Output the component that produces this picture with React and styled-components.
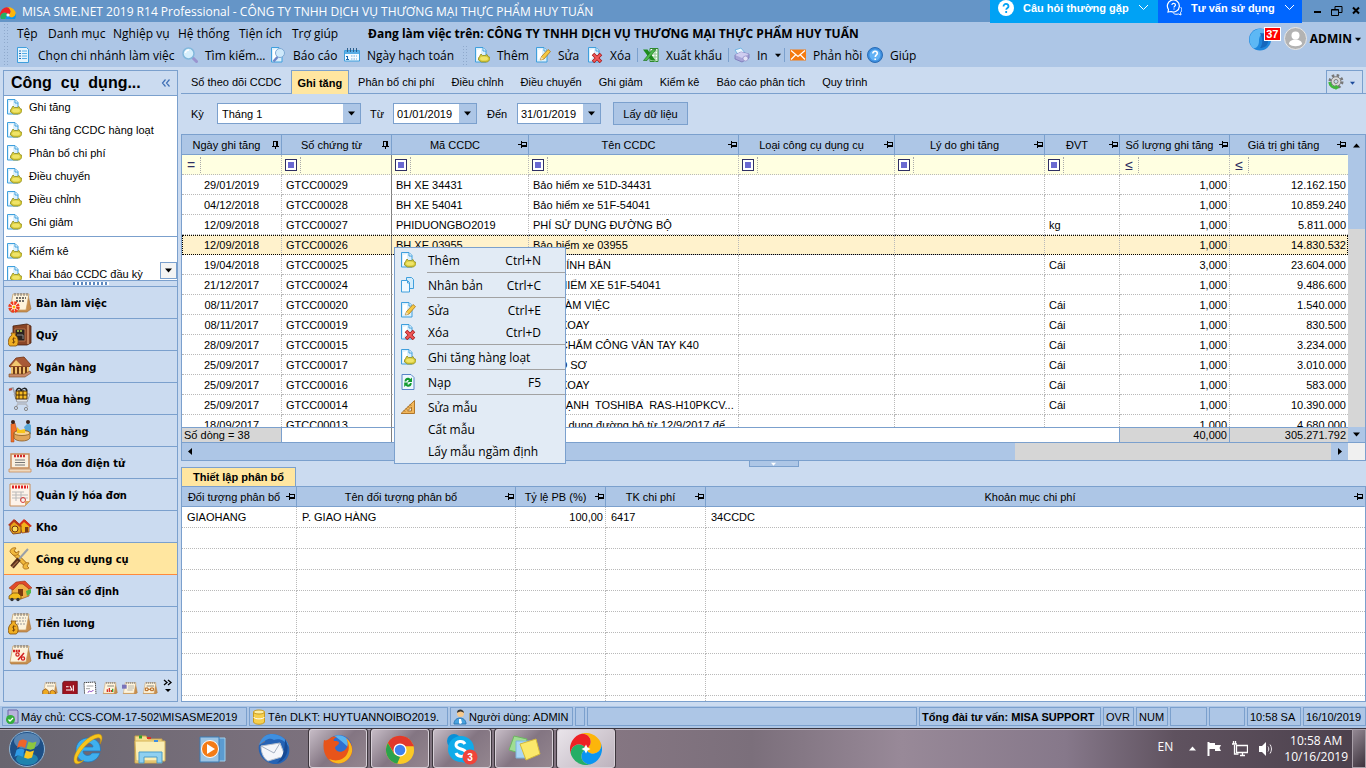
import React from "react";
import styled, { createGlobalStyle, css } from "styled-components";

const GlobalStyle = createGlobalStyle`
  * { box-sizing: border-box; }
  html, body { margin: 0; height: 100%; overflow: hidden; }
  body { font-family: "Liberation Sans", Arial, sans-serif; font-size: 11px; color: #000; }
  button, input, select { font: inherit; color: inherit; margin: 0; padding: 0; border: 0; background: none; border-radius: 0; outline: none; }
  svg { display: block; flex: none; }
  h1, h2, ul { margin: 0; padding: 0; list-style: none; }
`;

const line = "#7ba0cd";
const panel = "#cbdbf0";
const bar = "#adc6e6";
const active = "#ffe6a0";
const dots = "#b9b9b9";
const uiFont = '"Open Sans", "Noto Sans", sans-serif';

/* ---------- icons ---------- */

const Svg = ({ w = 16, h = w, vw = w, vh = h, children }) => (
  <svg width={w} height={h} viewBox={`0 0 ${vw} ${vh}`} fill="none" aria-hidden="true">{children}</svg>
);

/* One quarter of the pinwheel: its head bulges clockwise into the next quarter. */
const petal = "M16 16A8 8 0 0 0 16 0A16 16 0 0 1 32 16A8 8 0 0 1 16 16z";
const MisaLogo = ({ size = 16 }) => (
  <Svg w={size} vw={32}>
    {[["#fdb50a", -25], ["#0a95f0", 65], ["#25ae66", 155], ["#ee2024", 245]].map(([fill, turn]) => (
      <path key={turn} d={petal} fill={fill} transform={`rotate(${turn} 16 16)`} />
    ))}
    <path d="M16 11.500l1.500 3L20.500 16l-3 1.500-1.500 3-1.500-3-3-1.500 3-1.500z" fill="#fff" />
  </Svg>
);

const Page = () => (
  <>
    <path d="M1.500.500h7.500l3 3v11.500h-10.500z" fill="#dcf0fc" stroke="#3f9fdd" />
    <path d="M9 1v3h3" fill="#fff" stroke="#3f9fdd" />
    <path d="M3 3l4-1v7l-4 4z" fill="#fff" />
  </>
);
const DocCoin = () => (
  <Svg>
    <Page />
    <path d="M5.500 9.500l1.500-2.500 1.500 1.500h3l1.500-1 1 2 2 1v2l-2.500 2.500h-6l-3-2v-2z" fill="#d6c93a" stroke="#8c8a20" strokeWidth=".8" />
    <ellipse cx="10" cy="11.500" rx="4" ry="2" fill="#efe468" />
  </Svg>
);
const DocPen = () => (
  <Svg>
    <Page />
    <path d="M5.500 13l1-3.500 6.500-7 2.500 2-6.500 7.500z" fill="#f6c843" stroke="#a9781c" strokeWidth=".8" />
    <path d="M5.500 13l1-3 2 2z" fill="#f6e0b8" />
  </Svg>
);
const DocX = () => (
  <Svg>
    <Page />
    <path d="M6 7l8 8M14 7l-8 8" stroke="#a71616" strokeWidth="3.500" />
    <path d="M6.500 7.500l7 7M13.500 7.500l-7 7" stroke="#f05a5a" strokeWidth="2" />
  </Svg>
);
const DocLens = () => (
  <Svg>
    <Page />
    <circle cx="10" cy="6" r="4.500" fill="#cfe9fb" stroke="#7fa9d4" />
    <path d="M7.500 10l-4 4.500" stroke="#6f86c8" strokeWidth="2.500" />
  </Svg>
);
const DocList = () => (
  <Svg>
    <path d="M2.500.500h9l2 2v13h-11z" fill="#e5f4fd" stroke="#3f9fdd" />
    <path d="M4 4h2M4 6.500h2M4 9h2M4 11.500h2" stroke="#1c6fb8" />
    <path d="M7 4h5M7 6.500h5M7 9h5M7 11.500h5" stroke="#58aee6" />
  </Svg>
);
const Search = () => (
  <Svg>
    <path d="M10 10l4.500 4.500" stroke="#9a94cf" strokeWidth="3" strokeLinecap="round" />
    <circle cx="6.500" cy="6.500" r="5.500" fill="#d6effc" stroke="#82b8dc" strokeWidth="1.500" />
    <path d="M3.500 6c0-2 2-3 3.500-3" stroke="#fff" strokeWidth="1.500" />
  </Svg>
);
const Calendar = () => (
  <Svg>
    <path d="M.500 3.500h15v10.500h-15z" fill="#f4fbff" stroke="#3f9fdd" />
    <path d="M1 4h14v3h-14z" fill="#58aee6" />
    <path d="M3.500 1v4M6.500 1v4M9.500 1v4M12.500 1v4" stroke="#2c5f8c" />
    <path d="M3.500 9v3.500M2 9.500h1.500M2 12.500h3" stroke="#1667b2" />
    <path d="M7 9h6M7 12h6" stroke="#9cc9ea" strokeDasharray="1.500 1" strokeWidth="1.500" />
  </Svg>
);
const Copy = () => (
  <Svg>
    <path d="M6.500.500h5l2 2v9h-7z" fill="#d3ecfb" stroke="#3f9fdd" />
    <path d="M1.500 3.500h6l2 2v9.500h-8z" fill="#f0f9fe" stroke="#3f9fdd" />
    <path d="M7.500 4v2h2" stroke="#3f9fdd" />
  </Svg>
);
const Excel = () => (
  <Svg>
    <path d="M7 1.500h8v13h-8z" fill="#fff" stroke="#2f8a2f" />
    <path d="M9 4h6M9 7h6M9 10h6M9 13h6M12 2v13" stroke="#8fca8f" />
    <path d="M0 2.500h4.500l8 11h-4.500z" fill="#1c8b1c" />
    <path d="M13 2.500h-3.500l-9 11h3.500z" fill="#4cb84c" stroke="#136913" strokeWidth=".6" />
  </Svg>
);
const Printer = () => (
  <Svg>
    <path d="M1 3l6-2 4 5-6 3z" fill="#eaf6ff" stroke="#62aee0" strokeWidth=".8" />
    <path d="M1 8l6-3 8 2v4l-7 4-7-3z" fill="#a7a5d8" stroke="#7773b5" strokeWidth=".8" />
    <path d="M1 8l7 3 7-4-8-2z" fill="#cfcdf0" />
    <circle cx="11.500" cy="11.500" r="2.500" fill="#e4e3f7" stroke="#8683c0" strokeWidth=".6" />
  </Svg>
);
const Mail = () => (
  <Svg>
    <path d="M0 2.500h16v11h-16z" fill="#f47a10" />
    <path d="M1 3.500l7 6 7-6M1 12.500l5-5M15 12.500l-5-5" stroke="#fff" strokeWidth="1.200" />
  </Svg>
);
const Help = () => (
  <Svg>
    <circle cx="8" cy="8" r="7.500" fill="#3d8ede" stroke="#2a6cb5" />
    <circle cx="8" cy="8" r="5.500" fill="#63b2f5" />
    <path d="M5.800 6.500c0-3 4.500-2.800 4.500 0 0 1.500-2 1.500-2 3.500M8.200 11.500v1.500" stroke="#fff" strokeWidth="1.600" />
  </Svg>
);
const Refresh = () => (
  <Svg>
    <path d="M2 .500h9l3 3v12h-12z" fill="#eef7fe" stroke="#5b86c8" />
    <path d="M4.500 7.500c0-4 4-5 6-2.500l1.500-1.500v4.500h-4.500l1.500-1.500c-1-1-2.500-.5-2.700 1z" fill="#129a2f" />
    <path d="M11.700 9c0 4-4 5-6 2.500l-1.500 1.500v-4.500h4.500l-1.500 1.500c1 1 2.500.5 2.700-1z" fill="#129a2f" />
  </Svg>
);
const Ruler = () => (
  <Svg>
    <path d="M1 14.500L14.500 1.500v13z" fill="#f2b75b" stroke="#b0762a" />
    <path d="M7.500 12l4-4v4z" fill="#e2ebf5" stroke="#b0762a" />
    <path d="M4 11.500l1 1M6 9.500l1 1M8 7.500l1 1M10 5.500l1 1" stroke="#7c4f12" />
  </Svg>
);
const Gear = () => (
  <Svg>
    <circle cx="8" cy="7.500" r="6" stroke="#777" strokeWidth="3" strokeDasharray="2.400 2.300" />
    <circle cx="8" cy="7.500" r="4.800" fill="#d9d9d9" stroke="#808080" />
    <circle cx="8" cy="7.500" r="2" fill="#cbdbf0" stroke="#808080" />
    <path d="M1.500 8c.5 4 3.500 6 7 5.500" stroke="#3fb83a" strokeWidth="2.500" />
    <path d="M7.500 10.500l4 3-4 2.500z" fill="#3fb83a" />
  </Svg>
);
const PinIcon = ({ vertical }) => (
  <Svg w={9}>
    {vertical ? (
      <path d="M2.500 1.500h4M2.500 1v5M5.500 1v5M6.500 1v5M1 6.500h7M4.500 7v2" stroke="#000" />
    ) : (
      <path d="M0 4.500h3M3.500 1v7M4 2.500h5M4 5.500h5M4 6.500h5M8.500 2v5" stroke="#000" />
    )}
  </Svg>
);
const Caret = ({ dir = "down", color = "#000", size = 7 }) => {
  const d = { down: "M0 1.500h7l-3.500 4z", up: "M0 5.500h7l-3.500-4z", left: "M5 0v7l-4-3.500z", right: "M2 0v7l4-3.500z" }[dir];
  return <Svg w={size} vw={7}><path d={d} fill={color} /></Svg>;
};
const Chevron = () => <Svg w={11} h={7}><path d="M1 1l4.500 4.500L10 1" stroke="#fff" /></Svg>;

/* Desk-calendar sheet shared by several module icons. */
const Sheet = ({ children }) => (
  <>
    <path d="M20 4l3 14-4 3H3l-1-2z" fill="#c98f4f" stroke="#a8763c" strokeWidth=".7" />
    <path d="M5 3h16l-3 16H2z" fill="#fdf3dc" stroke="#c79a5b" strokeWidth=".7" />
    <path d="M7 2v3M10 2v3M13 2v3M16 2v3M19 2v3" stroke="#555" strokeWidth=".8" />
    {children}
  </>
);
const MoneyBag = () => (
  <>
    <path d="M4 12l-1-2h5l-1 2c4 2 4 10 1 11H2c-3-1-2-9 2-11z" fill="#f0ae22" stroke="#7d4c0b" strokeWidth=".8" />
    <path d="M7.500 15.500c-2-1-4 .5-2 1.800s1.500 3-1.200 2.200M5.500 14.500v6" stroke="#6b3a06" strokeWidth=".8" />
  </>
);
const moduleArt = {
  desk: (
    <Sheet>
      <path d="M8 7h10M8 10h9" stroke="#444" strokeWidth="1.300" strokeDasharray="2 1" />
      <circle cx="6" cy="16" r="4" fill="#fff" stroke="#f03a1c" strokeWidth="3.500" strokeDasharray="2.200 .9" />
      <circle cx="6" cy="16" r="1.500" fill="#f7b500" />
    </Sheet>
  ),
  safe: (
    <>
      <path d="M5 3l14-2 4 2v17l-4 2H5z" fill="#8a4526" stroke="#46200c" strokeWidth=".8" />
      <path d="M7 6h10v12H7z" fill="#2b2320" stroke="#b9754a" />
      <path d="M9 8h6" stroke="#b8d24e" strokeWidth="1.500" strokeDasharray="2 1" /><path d="M9 12h6v4" stroke="#8b8b8b" />
      <path d="M20 2v19" stroke="#c4835a" strokeWidth="2" />
      <MoneyBag />
    </>
  ),
  bank: (
    <>
      <path d="M1 11L8 3l8-1 7 8-2 2H2z" fill="#a85a36" stroke="#70300f" strokeWidth=".8" />
      <path d="M3 11l5-6 6 6z" fill="#f1c870" />
      <path d="M3 12h17v7H3z" fill="#6e3b18" />
      <path d="M4 12v7M8 12v7M12 12v7M16 12v7M20 12v6" stroke="#f0bf6b" strokeWidth="2" />
      <path d="M1 19h15l6-3 1 2-6 4H1z" fill="#c98a6b" stroke="#7a4317" strokeWidth=".6" />
    </>
  ),
  cart: (
    <>
      <path d="M1 2l4-1 4 13h9" stroke="#9b9ea6" strokeWidth="1.500" />
      <path d="M1 3l3-1" stroke="#c54c3a" strokeWidth="2" />
      <path d="M6 7h16l-3 8H9z" fill="#dfe3ea" stroke="#9b9ea6" />
      <path d="M8 4h11v8H8z" fill="#f8bd22" stroke="#4b2c05" />
      <path d="M11 3v9M15 3v9M8 8h11" stroke="#4b2c05" />
      <path d="M8 4c2-4 5-3 5 0 1-3 5-4 6 0" stroke="#222" strokeWidth="1.500" />
      <path d="M9 17h9l2 3M10 17l-2 3" stroke="#b4b8c0" strokeWidth="1.500" />
      <circle cx="8" cy="21" r="1.600" stroke="#888" /><circle cx="18" cy="22" r="1.600" stroke="#888" />
    </>
  ),
  sell: (
    <>
      <path d="M3 5l4-1 2 8-3 4v7H3z" fill="#f0702a" stroke="#a3441a" strokeWidth=".5" /><circle cx="5" cy="3" r="2" fill="#3a2118" />
      <path d="M16 8l4-4 3 2v9l-4 1z" fill="#58a6d8" /><circle cx="20" cy="3" r="2" fill="#3a2118" />
      <path d="M6 14c0-3 16-3 16 0v5c-2 4-14 4-16 0z" fill="#e0a65a" stroke="#8c5a21" strokeWidth=".8" />
      <ellipse cx="14" cy="14" rx="8" ry="2.500" fill="#f8d493" stroke="#8c5a21" strokeWidth=".8" />
      <path d="M9 8l3 3 5-1v4H9z" fill="#f7c51b" />
    </>
  ),
  einvoice: (
    <>
      <path d="M3 3h18v14H3z" fill="#f9efe0" stroke="#c98d58" strokeWidth="1.500" />
      <path d="M6 5h12" stroke="#d32a2a" strokeWidth="2.500" strokeDasharray="2 1" />
      <path d="M7 9h10M7 11.500h10M7 14h10" stroke="#777" />
      <path d="M1 18h22v3H1z" fill="#f0d9bf" stroke="#c98d58" strokeWidth=".8" />
    </>
  ),
  invoice: (
    <>
      <path d="M2 1h20v17l-5 5H2z" fill="#fdf3ea" stroke="#c98d58" />
      <path d="M4 4h16" stroke="#e02121" strokeWidth="3" strokeDasharray="2 1" />
      <path d="M4 9h12M4 12h16M4 15h16M8 9v9M13 9v9" stroke="#b9b9b9" />
      <circle cx="15" cy="17" r="2.500" stroke="#d63a3a" />
      <path d="M22 18h-5v5z" fill="#d9a766" />
    </>
  ),
  store: (
    <>
      <path d="M11 10l6-5 6 6-2 1v5l-7 1z" fill="#f2b31c" stroke="#8b2d10" strokeWidth=".7" />
      <path d="M10 10l6-6 8 7-2 1-6-5-4 4z" fill="#d3321b" />
      <path d="M2 10l5-5 6 6v7l-8 1-3-4z" fill="#e8a41a" stroke="#70300f" strokeWidth=".8" />
      <path d="M0 10l6-6 8 7-2 1-6-5-4 4z" fill="#b3371d" />
      <circle cx="7" cy="14" r="3" fill="#f9dd5c" stroke="#70300f" />
      <path d="M17 12h3v5h-3z" fill="#7b3d13" />
    </>
  ),
  tools: (
    <>
      <path d="M5 5l13 13" stroke="#a36a14" strokeWidth="4.500" />
      <path d="M5 5l13 13" stroke="#f0b83c" strokeWidth="3" />
      <path d="M2 5c0-3 3-5 6-4L6 4l2 2 3-2c0 4-3 5-6 4zM15 20c0-3 3-5 6-4l-2 3 2 2c-3 2-6 1-6-1z" fill="#f0b83c" stroke="#a36a14" strokeWidth=".8" />
      <path d="M20 2l-9 10" stroke="#9aa0a8" strokeWidth="2" />
      <path d="M11 12l-7 8" stroke="#57301a" strokeWidth="4.500" />
      <path d="M10 14l-6 6" stroke="#a06a42" strokeWidth="1.200" />
    </>
  ),
  asset: (
    <>
      <path d="M4 9l8-6 9 6v8l-8 3-9-3z" fill="#f0b145" stroke="#9b5a17" strokeWidth=".7" />
      <path d="M1 9l7-6 9-1 7 7-3 1-6-5-4 0-6 6z" fill="#e04a28" stroke="#8e2610" strokeWidth=".5" />
      <path d="M10 10h5v7h-5z" fill="#7c3a10" />
      <path d="M18 12l5-2v4l-4 3z" fill="#55b544" />
      <path d="M1 17l4-3h5l3 3v3H1z" fill="#f3bd1f" stroke="#6d4306" strokeWidth=".7" />
      <circle cx="4" cy="20.500" r="1.700" fill="#333" /><circle cx="10" cy="20.500" r="1.700" fill="#333" />
    </>
  ),
  salary: <Sheet><path d="M8 7h10M8 10h10M9 13h8" stroke="#999" strokeDasharray="2 1" /><MoneyBag /></Sheet>,
  tax: (
    <Sheet>
      <path d="M5 8h7" stroke="#d31f1f" strokeWidth="2.500" strokeDasharray="2 .6" />
      <path d="M10 17l6-7" stroke="#d31f1f" strokeWidth="1.500" />
      <circle cx="9.500" cy="11.500" r="1.600" stroke="#d31f1f" strokeWidth="1.300" />
      <circle cx="15" cy="15.500" r="1.600" stroke="#d31f1f" strokeWidth="1.300" />
    </Sheet>
  ),
  price: <Sheet><path d="M8 8h10" stroke="#555" strokeDasharray="2 1" /><path d="M1 22v-7l5-3 4 4v6zM12 21v-5l4-2 4 3v4z" fill="#eeaa22" stroke="#7a3e0d" /></Sheet>,
  ledger: (
    <>
      <path d="M3 1h20v20l-2 2H1V3z" fill="#9c1420" stroke="#5c0810" />
      <path d="M6 9h4M6 14h9M12 8l3 6M17 7v9" stroke="#fff" strokeWidth="1.600" />
    </>
  ),
  contract: (
    <>
      <path d="M3 3l17-1 1 19-17 1z" fill="#fff" stroke="#444" strokeWidth="1.500" strokeDasharray="2 1" />
      <path d="M7 8h10M6 12h6" stroke="#777" /><path d="M9 18c2-6 4 2 8-4" stroke="#8a3fc0" strokeWidth="1.500" />
    </>
  ),
  budget: <Sheet><path d="M8 8h10" stroke="#555" /><path d="M8 17v-4M11 17v-6M14 17v-3" stroke="#d8302a" strokeWidth="2" /><path d="M16 17v-5" stroke="#36a636" strokeWidth="2" /></Sheet>,
  report: <Sheet><path d="M9 8h9M9 11h9M8 14h8" stroke="#999" /><path d="M0 6h7v6H0z" fill="#7a72b8" /></Sheet>,
  merge: <Sheet><path d="M7 8h11" stroke="#555" /><path d="M5 11h4v4H5zM13 11h4v4h-4z" stroke="#b5651d" strokeWidth="1.500" /><path d="M9 13h4" stroke="#b5651d" strokeWidth="1.500" /></Sheet>,
};
const ModuleIcon = ({ name, size = 24 }) => <Svg w={size} vw={24}>{moduleArt[name]}</Svg>;

/* ---------- shell ---------- */

const Shell = styled.div`
  height: 100vh; display: flex; flex-direction: column; background: ${panel}; overflow: hidden; white-space: nowrap;
`;
const TitleBar = styled.header`
  height: 22px; flex: none; display: flex; align-items: center; background: #6595c7; color: #fff;
  font: 12px ${uiFont};
`;
const TitleText = styled.h1`font: inherit; flex: 1; padding-left: 6px;`;
const PromoButton = styled.button`
  align-self: flex-start; height: 23px; width: ${p => p.$w}px; background: ${p => p.$bg};
  display: flex; align-items: center; gap: 9px; padding: 0 12px 8px 8px; font-size: 11px;
  font-weight: bold; font-family: "Liberation Sans", sans-serif; color: #fff; z-index: 1;
  span { flex: 1; text-align: left; }
`;
const WindowButtons = styled.div`
  width: 64px; display: flex; justify-content: space-between; padding: 0 4px 0 10px;
`;
const CommandArea = styled.div`
  height: 45px; flex: none; display: flex; background: ${bar}; font: 12px ${uiFont};
`;
const Commands = styled.div`flex: 1; min-width: 0;`;
const MenuRow = styled.nav`height: 22px; display: flex; align-items: center; padding-left: 3px;`;
const Grip = styled.div`
  width: 5px; height: 20px; flex: none; margin-right: ${p => p.$gap}px;
  background-image: radial-gradient(circle, #8fa9cc 1px, transparent 1px); background-size: 3px 3px;
`;
const MenuItem = styled.button`width: ${p => p.$w}px; text-align: left;`;
const Workplace = styled.strong`flex: none; font-weight: bold; margin-right: 3px;`;
const ToolRow = styled.div`height: 22px; display: flex; align-items: center; padding-left: 3px;`;
const Tool = styled.button`
  width: ${p => p.$w}px; display: flex; align-items: center; gap: 7px; flex: none;
`;
const ToolSep = styled.div`width: 1px; height: 14px; margin-right: 5px; background: ${line};`;
const Account = styled.div`display: flex; align-items: center; padding: 0 5px 12px 0;`;
const Globe = styled.button`position: relative; width: 36px; height: 24px;`;
const CountBadge = styled.span`
  position: absolute; left: 16px; top: 0; width: 17px; height: 14px; background: #f00; color: #fff;
  border: 1px solid #fff; font: bold 11px/12px "Liberation Sans", sans-serif; text-align: center;
`;
const UserButton = styled.button`
  display: flex; align-items: center; gap: 3px; font-weight: bold;
`;
const Body = styled.div`flex: 1; min-height: 0; display: flex; gap: 3px; padding: 3px 0 4px 3px;`;

/* ---------- side bar ---------- */

const Side = styled.aside`
  width: 175px; flex: none; border: 1px solid ${line}; display: flex; flex-direction: column;
`;
const SideHead = styled.div`
  height: 25px; flex: none; display: flex; align-items: center; justify-content: space-between;
  padding: 0 6px 0 7px; border-bottom: 1px solid ${line};
  h2 { font-size: 16px; white-space: pre; }
`;
const TaskList = styled.ul`position: relative; flex: 1; min-height: 0; background: #fff; overflow: hidden;`;
const TaskItem = styled.li`
  height: 23px; margin-left: 2px;
  ${p => p.$split && css`border-top: 1px solid ${line}; margin-top: 2px; padding-top: 3px; height: 27px;`}
`;
const TaskButton = styled.button`display: flex; align-items: center; gap: 7px; height: 22px;`;
const ScrollDown = styled.button`
  position: absolute; right: 0; bottom: 1px; width: 17px; height: 17px; background: #f4f4f4;
  border: 1px solid ${line}; display: grid; place-items: center;
`;
const Splitter = styled.div`
  height: 6px; flex: none; border-top: 1px solid ${line}; display: flex; justify-content: center;
  &::after { content: ""; width: 36px; height: 3px; margin-top: 1px;
    background: repeating-linear-gradient(90deg, #5f8ac0 0 2px, #fff 2px 4px); }
`;
const ModuleButton = styled.button`
  height: 32px; flex: none; width: 100%; display: flex; align-items: center; gap: 4px; padding: 1px 0 0 4px;
  border-bottom: 1px solid ${line}; font: bold 11px "DejaVu Sans Condensed", "DejaVu Sans", sans-serif;
  ${p => p.$active && css`background: ${active}; border-bottom-color: #ff8a3c;`}
`;
const SideFoot = styled.div`
  height: 31px; flex: none; display: flex; align-items: center; justify-content: flex-end; gap: 4px; padding: 0 3px 1px 0;
  border-top: 1px solid ${line};
`;
const Modules = styled.nav`flex: none; border-top: 1px solid ${line}; ${ModuleButton}:last-child { border-bottom: 0; height: 31px; }`;

/* ---------- work area ---------- */

const Main = styled.main`position: relative; flex: 1; min-width: 0; display: flex; flex-direction: column;`;
const TabBar = styled.div`
  height: 24px; flex: none; display: flex; gap: 1px; border-bottom: 1px solid ${line}; padding: 0 3px 0 2px;
`;
const Tab = styled.button`
  padding: 0 8px; height: 24px; flex: none;
  ${p => p.$active && css`
    font-weight: bold; background: ${active}; border: 1px solid ${line}; border-bottom: 0; padding: 0 6px;`}
`;
const Options = styled.button`
  margin-left: auto; height: 24px; width: 37px; border: 1px solid ${line}; display: flex; align-items: center; gap: 6px; padding-left: 1px;
`;
const FilterForm = styled.form`
  height: 40px; flex: none; display: flex; align-items: center; padding: 0 0 1px 10px;
`;
const Label = styled.label`width: ${p => p.$w}px; flex: none;`;
const Field = styled.div`
  width: ${p => p.$w}px; height: 21px; margin-right: ${p => p.$mr}px; display: flex; border: 1px solid ${line}; background: #fff; position: relative;
`;
const FieldInput = styled.input`flex: 1; min-width: 0; padding-left: 3px;`;
const FieldSelect = styled.select`flex: 1; min-width: 0; appearance: none; padding: 0 20px 0 4px;`;
const FieldArrow = styled.span`width: 17px; flex: none; background: ${bar}; display: grid; place-items: center; pointer-events: none;
  ${p => p.$over && css`position: absolute; right: 0; top: 0; bottom: 0;`}`;
const LoadButton = styled.button`
  width: 75px; height: 23px; background: ${bar}; border: 1px solid ${line};
`;

const GridFrame = styled.section`
  border: 1px solid ${line}; display: flex; flex-direction: column; background: #fff;
  ${p => (p.$h ? css`height: ${p.$h}px; flex: none;` : css`flex: 1; min-height: 0; overflow: hidden;`)}
`;
const GridTop = styled.div`display: flex; flex: 1; min-height: 0;`;
const GridCols = styled.div`flex: 1; min-width: 0; display: flex; flex-direction: column;`;
const GridClip = styled.div`flex: 1; min-height: 0; overflow: hidden;`;
const Table = styled.table`width: 100%; table-layout: fixed; border-collapse: separate; border-spacing: 0;`;
const Th = styled.th`
  height: 20px; padding: 0 1px 0 0; font-weight: normal; background: ${bar};
  border-right: 1px solid ${line}; border-bottom: 1px solid ${line};
  &:last-child { border-right-color: ${bar}; }
`;
const ThInner = styled.div`display: flex; align-items: center; span { flex: 1; overflow: hidden; text-align: center; }`;
const Td = styled.td`
  height: ${p => (p.$detail ? 21 : 20)}px; text-align: ${p => p.$align || "left"};
  padding: 0 2px 0 ${p => (p.$align === "center" ? 2 : p.$detail ? 5 : 4)}px;
  overflow: hidden; text-overflow: ellipsis; border-right: 1px dotted ${dots}; border-bottom: 1px dotted ${dots};
  ${p => p.$frozen && css`border-right: 1px solid #808080;`}
  &:last-child { border-right: 0; }
`;
const Tr = styled.tr`${p => p.$selected && css`background: #fff2cc; outline: 1px dotted #000; outline-offset: -1px;`}`;
const FilterTd = styled(Td)`background: #ffffe1; padding: 0;`;
const FilterCell = styled.div`display: flex; height: 19px; align-items: center;
  input { flex: 1; min-width: 0; height: 16px; border-left: 1px dotted #aaa; padding: 0 3px; }`;
const FilterOp = styled.span`
  width: 18px; flex: none; display: grid; place-items: center; color: #2f2f63; font-size: 14px; line-height: 16px;
  i { width: 12px; height: 12px; border: 1px solid #2f2f63; background: #6a69d0; box-shadow: inset 0 0 0 2px #fff; }
`;
const SumTd = styled.td`
  height: 15px; padding: 0 2px; text-align: ${p => p.$align || "left"}; line-height: 13px;
  border-top: 1px solid ${line};
  ${p => p.$filled && css`background: #d6d6d6; border-right: 1px solid ${line};`}
  ${p => p.$frozen && css`border-right: 1px solid #808080;`}
  ${p => p.$edge && css`border-right: 1px solid ${line};`}
  &:last-child { border-right: 0; }
`;
const VScroll = styled.div`width: 17px; flex: none; display: flex; flex-direction: column; background: #d6d6d6;`;
const Arrow = styled.button`display: grid; place-items: center; flex: none; background: ${bar}; width: 17px; height: ${p => p.$h || 17}px;`;
const VThumb = styled.div`height: 24%; flex: none; background: ${bar};`;
const Spacer = styled.div`flex: 1;`;
const HScroll = styled.div`height: 18px; flex: none; display: flex; border-top: 1px solid ${line}; background: #d6d6d6;`;
const HThumb = styled.div`width: 69%; background: ${bar};`;
const Corner = styled.div`width: 17px; background: #f0f0f0;`;
const Collapse = styled.button`
  align-self: center; width: 50px; height: 6px; flex: none; border: 1px solid ${line}; border-top: 0; background: ${bar};
  display: grid; place-items: center;
`;
const DetailTab = styled.button`
  align-self: flex-start; flex: none; width: 115px; height: 19px; border: 1px solid ${line}; border-bottom: 0; background: ${active}; font-weight: bold;
`;

/* ---------- context menu ---------- */

const Context = styled.div`
  position: absolute; left: 213px; top: 177px; width: 172px; padding: 1px 0; background: #e2ebf5; border: 1px solid ${line};
  font: 12px ${uiFont};
`;
const ContextItem = styled.button`
  width: 100%; height: 22px; display: grid; grid-template-columns: 28px 1fr auto; align-items: center; text-align: left;
  padding: 0 24px 0 5px;
`;
const ContextSep = styled.div`height: 3px; margin-left: 32px; border-bottom: 1px solid transparent; border-top: 1px solid transparent; background: #a2a2a2; background-clip: padding-box;`;

/* ---------- status bar and task bar ---------- */

const Status = styled.footer`
  height: 22px; flex: none; display: flex; gap: 2px; padding: 1px 0 2px 2px; background: ${bar};
`;
const StatusCell = styled.div`
  ${p => (p.$w ? css`width: ${p.$w}px; flex: none;` : css`flex: 1;`)}
  border: 1px solid ${line}; display: flex; align-items: center; gap: 2px; padding: 0 2px;
  font-weight: ${p => (p.$bold ? "bold" : "normal")};
`;
const TaskBar = styled.div`
  height: 40px; flex: none; display: flex; align-items: center; border-top: 1px solid #3b3640;
  background: linear-gradient(90deg, #68656f 0, #7a707c 20%, #857682 45%, #7b6f7b 55%, #988998 66%, #86788a 78%, #5f525f 86%, #4b404c 100%);
  box-shadow: inset 0 1px 0 #b7adb7; color: #fff;
`;
const StartButton = styled.button`width: 57px; height: 39px; padding-left: 8px; flex: none;`;
const AppButton = styled.button`
  width: 62px; height: 39px; display: grid; place-items: center; flex: none;
  ${p => p.$open && css`
    width: 58px; margin-left: 4px; border: 1px solid #d7cfd7; border-radius: 3px; box-shadow: 0 0 0 1px #3d363d;
    background: linear-gradient(135deg, ${p.$front ? "#e9e4ea, #bdb3bd" : "#c6bcc6, #837582 50%, #94868f"});`}
`;
const Tray = styled.div`
  margin-left: auto; display: flex; align-items: center; height: 39px; gap: 10px; font: 12px/16px ${uiFont}; text-align: center;
`;
const TrayLang = styled.span`margin-right: 6px; padding-bottom: 4px;`;
const ShowDesktop = styled.button`width: 14px; height: 39px; margin-left: -6px; border: 1px solid #a89fa8; background: linear-gradient(135deg, #938893, #3d333d);`;

const apps = [
  { name: "Internet Explorer", art: (
    <Svg w={34}>
      <path d="M17 6c8 0 13 5 12.500 13H12c0 5 7 6 9 2h8c-2 6-7 9-12 9C9 30 5 25 5 18S10 6 17 6zm-5 9h10c0-5-9-5-10 0z" fill="#3fb0ee" stroke="#1d77bd" strokeWidth=".7" />
      <path d="M4 31C0 26 8 12 19 5c7-4 12-4 12 1 0 2-1 4-2 6 1-4 1-7-3-6C17 8 5 24 6 28c1 3 5 1 7 0-3 3-7 5-9 3z" fill="#f8c51c" stroke="#c68f0c" strokeWidth=".5" />
    </Svg>) },
  { name: "Explorer", art: (
    <Svg w={34}>
      <path d="M2 4h11l2 3h14v24H2z" fill="#f4dc8c" stroke="#c9a146" />
      <path d="M2 9h30v20H3z" fill="#fbeeb5" stroke="#d6b255" />
      <path d="M6 5h3" stroke="#33a02c" strokeWidth="3" /><path d="M14 6h4" stroke="#d8302a" strokeWidth="2" /><path d="M21 9h4" stroke="#3f8fe0" strokeWidth="2" />
      <path d="M6 31v-11h23v11h-5v-6H11v6z" fill="#8fd0f0" stroke="#4a9cc9" />
    </Svg>) },
  { name: "Media Player", art: (
    <Svg w={30}>
      <path d="M6 4h22v23H6z" fill="#5b9bd0" stroke="#9fd0ee" /><path d="M3 3h19v25H3z" fill="#9cc4e4" stroke="#3c7db5" />
      <circle cx="13" cy="15" r="8.500" fill="#f47b16" stroke="#fff" /><path d="M10 10l8 5-8 5z" fill="#fff" />
    </Svg>) },
  { name: "Thunderbird", art: (
    <Svg w={34}>
      <path d="M8 4c8-5 22 0 24 11s-6 18-15 17C7 31 0 22 2 13l6-3z" fill="#2563b5" />
      <path d="M8 4c8-5 22 0 24 11-4-7-10-9-15-7C12 5 9 8 2 13 3 9 5 6 8 4z" fill="#3e8fe0" />
      <path d="M4 14l19-3 5 13-17 5c-5-3-7-9-7-15z" fill="#f4f6fa" stroke="#b6bfcc" /><path d="M4 14l13 7 6-10" stroke="#a6b1c2" />
      <path d="M28 7c6 10 1 22-8 24 5-4 8-12 8-24z" fill="#174a94" />
    </Svg>) },
  { name: "Firefox", open: true, art: (
    <Svg w={32}>
      <circle cx="17" cy="15" r="13" fill="#2f6fd0" /><path d="M12 3c8-3 18 3 17 14-5-5-9-9-17-14z" fill="#59b4f0" />
      <path d="M2 7c2 1 3 0 5-1 3-3 5-3 8-2-3 1-4 3-3 4 2 0 5 0 5 2s-4 3-4 5c1 4 6 5 10 2 4-4 3-9 1-12 7 5 8 13 4 19-5 8-17 8-22 2C1 20 1 13 2 7z" fill="#e8541a" />
      <path d="M24 5c7 6 8 14 3 20-5 7-15 7-20 1 7 3 15 1 18-5 3-5 2-11-1-16z" fill="#f9b91c" />
    </Svg>) },
  { name: "Chrome", open: true, art: (
    <Svg w={30} vw={32}>
      <circle cx="16" cy="16" r="15" fill="#fbc926" /><path d="M3 8.500a15 15 0 0 1 26 0L31 12H16l-6 8z" fill="#e2392b" />
      <path d="M3 8.500l7 12 6 3-3 7.200A15 15 0 0 1 3 8.500z" fill="#2ba24c" /><circle cx="16" cy="16" r="7" fill="#fff" /><circle cx="16" cy="16" r="5.600" fill="#3f82ee" />
    </Svg>) },
  { name: "Skype", open: true, art: (
    <Svg w={32}>
      <circle cx="8" cy="8" r="7" fill="#0a8fd6" /><circle cx="15" cy="16" r="13" fill="#0fabea" /><circle cx="20" cy="22" r="8" fill="#0fabea" />
      <path d="M19 11c-2-4-9-3-9 1 0 5 10 3 10 8 0 4-8 5-10 0" stroke="#fff" strokeWidth="3" />
      <circle cx="24" cy="24" r="7.500" fill="#f0443a" />
      <text x="24" y="28" textAnchor="middle" fill="#fff" fontSize="10" fontFamily="Liberation Sans" fontWeight="bold">3</text>
    </Svg>) },
  { name: "Sticky Notes", open: true, art: (
    <Svg w={34}>
      <path d="M7 4l13 3-4 15L2 18z" fill="#9fdd92" stroke="#6db661" /><path d="M9 9h14v17H9z" fill="#a9d6f5" stroke="#7db4dc" />
      <path d="M13 12l16-5 4 15-14 6z" fill="#fbe96b" stroke="#d4b93a" />
    </Svg>) },
  { name: "MISA SME.NET", open: true, front: true, art: <MisaLogo size={32} /> },
];

/* ---------- data ---------- */

const menus = [["Tệp", 31], ["Danh mục", 65], ["Nghiệp vụ", 65], ["Hệ thống", 61], ["Tiện ích", 53], ["Trợ giúp", 76]];
const tasks = ["Ghi tăng", "Ghi tăng CCDC hàng loạt", "Phân bổ chi phí", "Điều chuyển", "Điều chỉnh", "Ghi giảm", "Kiểm kê", "Khai báo CCDC đầu kỳ"];
const modules = [
  ["desk", "Bàn làm việc"], ["safe", "Quỹ"], ["bank", "Ngân hàng"], ["cart", "Mua hàng"], ["sell", "Bán hàng"],
  ["einvoice", "Hóa đơn điện tử"], ["invoice", "Quản lý hóa đơn"], ["store", "Kho"], ["tools", "Công cụ dụng cụ"],
  ["asset", "Tài sản cố định"], ["salary", "Tiền lương"], ["tax", "Thuế"],
];
const tabs = ["Sổ theo dõi CCDC", "Ghi tăng", "Phân bổ chi phí", "Điều chỉnh", "Điều chuyển", "Ghi giảm", "Kiểm kê", "Báo cáo phân tích", "Quy trình"];
const columns = [
  { label: "Ngày ghi tăng", w: 100, op: "=", align: "center" },
  { label: "Số chứng từ", w: 110, frozen: true },
  { label: "Mã CCDC", w: 137 },
  { label: "Tên CCDC" },
  { label: "Loại công cụ dụng cụ", w: 156 },
  { label: "Lý do ghi tăng", w: 150 },
  { label: "ĐVT", w: 75 },
  { label: "Số lượng ghi tăng", w: 110, op: "≤", align: "right" },
  { label: "Giá trị ghi tăng", w: 118, op: "≤", align: "right" },
];
const rows = [
  ["29/01/2019", "GTCC00029", "BH XE 34431", "Bảo hiểm xe 51D-34431", "", "", "", "1,000", "12.162.150"],
  ["04/12/2018", "GTCC00028", "BH XE 54041", "Bảo hiểm xe 51F-54041", "", "", "", "1,000", "10.859.240"],
  ["12/09/2018", "GTCC00027", "PHIDUONGBO2019", "PHÍ SỬ DỤNG ĐƯỜNG BỘ", "", "", "kg", "1,000", "5.811.000"],
  ["12/09/2018", "GTCC00026", "BH XE 03955", "Bảo hiểm xe 03955", "", "", "", "1,000", "14.830.532"],
  ["19/04/2018", "GTCC00025", "", "MÁY TÍNH BẢN", "", "", "Cái", "3,000", "23.604.000"],
  ["21/12/2017", "GTCC00024", "", "BẢO HIỂM XE 51F-54041", "", "", "", "1,000", "9.486.600"],
  ["08/11/2017", "GTCC00020", "", "BÀN LÀM VIỆC", "", "", "Cái", "1,000", "1.540.000"],
  ["08/11/2017", "GTCC00019", "", "GHẾ XOAY", "", "", "Cái", "1,000", "830.500"],
  ["28/09/2017", "GTCC00015", "", "MÁY CHẤM CÔNG VÂN TAY K40", "", "", "Cái", "1,000", "3.234.000"],
  ["25/09/2017", "GTCC00017", "", "TỦ HỒ SƠ", "", "", "Cái", "1,000", "3.010.000"],
  ["25/09/2017", "GTCC00016", "", "GHẾ XOAY", "", "", "Cái", "1,000", "583.000"],
  ["25/09/2017", "GTCC00014", "", "MÁY LẠNH\u00a0 TOSHIBA\u00a0 RAS-H10PKCV...", "", "", "Cái", "1,000", "10.390.000"],
  ["18/09/2017", "GTCC00013", "", "Phí sử dụng đường bộ từ 12/9/2017 đế", "", "", "", "1,000", "4.680.000"],
];
const detailColumns = [
  { label: "Đối tượng phân bổ", w: 115 }, { label: "Tên đối tượng phân bổ", w: 219 }, { label: "Tỷ lệ PB (%)", w: 90, align: "right" },
  { label: "TK chi phí", w: 100 }, { label: "Khoản mục chi phí" },
];
const detailRow = ["GIAOHANG", "P. GIAO HÀNG", "100,00", "6417", "34CCDC"];
const contextItems = [
  { icon: <DocCoin />, text: "Thêm", key: "Ctrl+N" }, null,
  { icon: <Copy />, text: "Nhân bản", key: "Ctrl+C" }, null,
  { icon: <DocPen />, text: "Sửa", key: "Ctrl+E" },
  { icon: <DocX />, text: "Xóa", key: "Ctrl+D" }, null,
  { icon: <DocCoin />, text: "Ghi tăng hàng loạt" }, null,
  { icon: <Refresh />, text: "Nạp", key: "F5" }, null,
  { icon: <Ruler />, text: "Sửa mẫu" }, { text: "Cất mẫu" }, { text: "Lấy mẫu ngầm định" },
];

const Columns = ({ list }) => <colgroup>{list.map(c => <col key={c.label} width={c.w} />)}</colgroup>;
const Heads = ({ list, pinned = 0 }) => (
  <thead><tr>{list.map((c, i) => (
    <Th key={c.label} scope="col"><ThInner><span>{c.label}</span><PinIcon vertical={i < pinned} /></ThInner></Th>
  ))}</tr></thead>
);

export default function App() {
  return (
    <Shell>
      <GlobalStyle />
      <TitleBar>
        <MisaLogo />
        <TitleText>MISA SME.NET 2019 R14 Professional - CÔNG TY TNHH DỊCH VỤ THƯƠNG MẠI THỰC PHẨM HUY TUẤN</TitleText>
        <PromoButton $w={168} $bg="#00a2f5">
          <Svg><circle cx="8" cy="8" r="8" fill="#fff" /><path d="M5.500 6.500c0-3.500 5-3.300 5 0 0 1.500-2.300 1.500-2.300 3.300M8.200 11v2" stroke="#00a2f5" strokeWidth="1.800" /></Svg>
          <span>Câu hỏi thường gặp</span><Chevron />
        </PromoButton>
        <PromoButton $w={144} $bg="#0066ff">
          <Svg><path d="M2 12l.5-2.500A6 6 0 1 1 5 11.500z" stroke="#fff" strokeWidth="1.200" /><path d="M6 5c0-2.500 3.500-2 3.500 0 0 1-1.500 1-1.500 2.500M8 8.500v1" stroke="#fff" strokeWidth="1.200" /><path d="M14.500 7c2 2 1.500 4 0 5.500l.5 2.500-2.500-1c-2 .5-3.500.3-5-.5" stroke="#fff" /></Svg>
          <span>Tư vấn sử dụng</span><Chevron />
        </PromoButton>
        <WindowButtons>
          <button aria-label="Thu nhỏ"><Svg w={12}><path d="M2 7h7" stroke="#000" strokeWidth="2" /></Svg></button>
          <button aria-label="Khôi phục"><Svg w={12}><path d="M4 4V1.500h7v6H8M.500 4.500h7v6h-7zM.500 5h7" stroke="#000" /></Svg></button>
          <button aria-label="Đóng"><Svg w={12}><path d="M3 2.500l6 6M9 2.500l-6 6" stroke="#000" strokeWidth="2" /></Svg></button>
        </WindowButtons>
      </TitleBar>

      <CommandArea>
        <Commands>
          <MenuRow>
            <Grip $gap={9} />
            {menus.map(([t, w]) => <MenuItem key={t} $w={w}>{t}</MenuItem>)}
            <Workplace>Đang làm việc trên:</Workplace>
            <Workplace>CÔNG TY TNHH DỊCH VỤ THƯƠNG MẠI THỰC PHẨM HUY TUẤN</Workplace>
          </MenuRow>
          <ToolRow>
            <Grip $gap={7} />
            <Tool $w={167}><DocList />Chọn chi nhánh làm việc</Tool>
            <Tool $w={88}><Search />Tìm kiếm...</Tool>
            <Tool $w={74}><DocLens />Báo cáo</Tool>
            <Tool $w={118}><Calendar />Ngày hạch toán</Tool>
            <Grip $gap={7} />
            <Tool $w={61}><DocCoin />Thêm</Tool>
            <Tool $w={52}><DocPen />Sửa</Tool>
            <Tool $w={50}><DocX />Xóa</Tool>
            <ToolSep />
            <Tool $w={85}><Excel />Xuất khẩu</Tool>
            <ToolSep />
            <Tool $w={50}><Printer />In<Caret size={6} /></Tool>
            <ToolSep />
            <Tool $w={77}><Mail />Phản hồi</Tool>
            <Tool $w={60}><Help />Giúp</Tool>
          </ToolRow>
        </Commands>
        <Account>
          <Globe aria-label="Thông báo">
            <Svg w={24}>
              <circle cx="12" cy="12.500" r="11" fill="#1d86dc" /><path d="M3 7C8 0 17 1 19 5c-6 1-8 4-8 9s-3 8-6 7C2 18 0 12 3 7z" fill="#5db8f5" />
              <path d="M12 6c5 0 8 3 8 8s-4 7-8 7c3-4 3-9 0-15z" fill="#1668bd" />
            </Svg>
            <CountBadge>37</CountBadge>
          </Globe>
          <UserButton>
            <Svg w={23}><circle cx="11.500" cy="11.500" r="11" fill="#b3b3b3" stroke="#e8e8e8" /><circle cx="11.500" cy="8.500" r="4" fill="#fff" /><path d="M5 17c0-6 13-6 13 0-3 3-10 3-13 0z" fill="#fff" /></Svg>
            ADMIN
            <Caret size={6} />
          </UserButton>
        </Account>
      </CommandArea>

      <Body>
        <Side>
          <SideHead>
            <h2>{"Công\u00a0 cụ\u00a0 dụng..."}</h2>
            <Svg w={10}><path d="M4.500 1.500L1.500 5l3 3.500M8.500 1.500L5.500 5l3 3.500" stroke="#3f6fb5" strokeWidth="1.200" /></Svg>
          </SideHead>
          <TaskList>
            {tasks.map(t => (
              <TaskItem key={t} $split={t === "Kiểm kê"}><TaskButton><DocCoin />{t}</TaskButton></TaskItem>
            ))}
            <ScrollDown aria-label="Xem thêm"><Caret /></ScrollDown>
          </TaskList>
          <Splitter />
          <Modules>
            {modules.map(([icon, text]) => (
              <ModuleButton key={icon} $active={icon === "tools"}><ModuleIcon name={icon} />{text}</ModuleButton>
            ))}
          </Modules>
          <SideFoot>
            {["price", "ledger", "contract", "budget", "report", "merge"].map(n => <ModuleIcon key={n} name={n} size={16} />)}
            <Svg w={12} h={16}><path d="M2 2l3 2.500L2 7M6 2l3 2.500L6 7" stroke="#000" strokeWidth="1.300" /><path d="M3 11h6l-3 3z" fill="#000" /></Svg>
          </SideFoot>
        </Side>

        <Main>
          <TabBar>
            {tabs.map(t => <Tab key={t} $active={t === "Ghi tăng"}>{t}</Tab>)}
            <Options aria-label="Tùy chọn"><Gear /><Caret size={5} color="#1b4a9a" /></Options>
          </TabBar>
          <FilterForm onSubmit={e => e.preventDefault()}>
            <Label $w={26} htmlFor="period">Kỳ</Label>
            <Field $w={144} $mr={9}>
              <FieldSelect id="period"><option>Tháng 1</option></FieldSelect>
              <FieldArrow $over><Caret /></FieldArrow>
            </Field>
            <Label $w={23} htmlFor="from">Từ</Label>
            <Field $w={84} $mr={10}><FieldInput id="from" defaultValue="01/01/2019" /><FieldArrow><Caret /></FieldArrow></Field>
            <Label $w={30} htmlFor="to">Đến</Label>
            <Field $w={84} $mr={12}><FieldInput id="to" defaultValue="31/01/2019" /><FieldArrow><Caret /></FieldArrow></Field>
            <LoadButton type="submit">Lấy dữ liệu</LoadButton>
          </FilterForm>

          <GridFrame $h={327}>
            <GridTop>
              <GridCols>
                <GridClip>
                  <Table>
                    <Columns list={columns} />
                    <Heads list={columns} pinned={2} />
                    <tbody>
                      <tr>
                        {columns.map(c => (
                          <FilterTd key={c.label} $frozen={c.frozen}>
                            <FilterCell><FilterOp>{c.op || <i />}</FilterOp><input aria-label={`Lọc ${c.label}`} /></FilterCell>
                          </FilterTd>
                        ))}
                      </tr>
                      {rows.map((r, i) => (
                        <Tr key={r[1]} $selected={i === 3}>
                          {r.map((v, j) => <Td key={j} $align={columns[j].align} $frozen={columns[j].frozen}>{v}</Td>)}
                        </Tr>
                      ))}
                    </tbody>
                  </Table>
                </GridClip>
                <Table>
                  <Columns list={columns} />
                  <tbody>
                    <tr>
                      <SumTd $filled>Số dòng = 38</SumTd>
                      <SumTd $frozen /><SumTd /><SumTd /><SumTd /><SumTd /><SumTd $edge />
                      <SumTd $filled $align="right">40,000</SumTd>
                      <SumTd $filled $align="right">305.271.792</SumTd>
                    </tr>
                  </tbody>
                </Table>
              </GridCols>
              <VScroll>
                <Arrow $h={20} aria-label="Lên"><Caret dir="up" /></Arrow>
                <VThumb />
                <Spacer />
                <Arrow $h={15} aria-label="Xuống"><Caret /></Arrow>
              </VScroll>
            </GridTop>
            <HScroll>
              <Arrow aria-label="Trái"><Caret dir="left" /></Arrow>
              <HThumb />
              <Spacer />
              <Arrow aria-label="Phải"><Caret dir="right" /></Arrow>
              <Corner />
            </HScroll>
          </GridFrame>
          <Collapse aria-label="Thu gọn"><Caret size={5} color="#fff" /></Collapse>
          <DetailTab>Thiết lập phân bổ</DetailTab>
          <GridFrame>
            <Table>
              <Columns list={detailColumns} />
              <Heads list={detailColumns} />
              <tbody>
                <tr>{detailRow.map((v, j) => <Td key={j} $detail $align={detailColumns[j].align}>{v}</Td>)}</tr>
                {Array.from({ length: 9 }, (_, i) => (
                  <tr key={i}>{detailColumns.map(c => <Td key={c.label} $detail />)}</tr>
                ))}
              </tbody>
            </Table>
          </GridFrame>

          <Context>
            {contextItems.map((it, i) => it ? (
              <ContextItem key={i}><span>{it.icon}</span><span>{it.text}</span><span>{it.key}</span></ContextItem>
            ) : <ContextSep key={i} />)}
          </Context>
        </Main>
      </Body>

      <Status>
        <StatusCell $w={245}>
          <Svg w={14} h={16}><path d="M3 1h9l1 1v12H3z" fill="#b9b4dc" stroke="#6c67a8" /><circle cx="5.500" cy="10.500" r="4.500" fill="#35ae3c" /><path d="M3.500 10.500l1.500 1.500 3-3" stroke="#fff" strokeWidth="1.300" /></Svg>
          Máy chủ: CCS-COM-17-502\MISASME2019
        </StatusCell>
        <StatusCell $w={199}>
          <Svg w={14} h={16}><path d="M1.500 3v10c1 3 10 3 11 0V3z" fill="#f6cf4d" stroke="#c99a1f" /><ellipse cx="7" cy="3" rx="5.500" ry="2" fill="#fdeea6" stroke="#c99a1f" /><path d="M1.500 8c1 2.500 10 2.500 11 0" stroke="#fff" /></Svg>
          Tên DLKT: HUYTUANNOIBO2019.
        </StatusCell>
        <StatusCell $w={123}>
          <Svg w={14} h={16}><path d="M1 15c0-8 12-8 12 0z" fill="#4aa3df" stroke="#2c77b3" /><path d="M6 10h2l1 4-2 1-1-1z" fill="#fff" /><circle cx="7.500" cy="4.500" r="3.500" fill="#f6c98e" /><path d="M4 4c0-5 7-4 7 0-2-2-4-2-7 0z" fill="#333" /></Svg>
          Người dùng: ADMIN
        </StatusCell>
        <StatusCell $w={10} />
        <StatusCell />
        <StatusCell $w={182} $bold>Tổng đài tư vấn: MISA SUPPORT</StatusCell>
        <StatusCell $w={31}>OVR</StatusCell>
        <StatusCell $w={32}>NUM</StatusCell>
        <StatusCell $w={37} />
        <StatusCell $w={36} />
        <StatusCell $w={54}>10:58 SA</StatusCell>
        <StatusCell $w={63}>16/10/2019</StatusCell>
      </Status>

      <TaskBar>
        <StartButton aria-label="Start">
          <Svg w={38}>
            <circle cx="19" cy="19" r="17.500" fill="#1d4f86" stroke="#8fb6d6" /><ellipse cx="19" cy="11" rx="13" ry="8" fill="#7fa9cf" opacity=".6" /><ellipse cx="19" cy="29" rx="11" ry="6" fill="#23a7c9" opacity=".6" />
            <path d="M11 11c3-2 5-2 8 0l-2 7c-3-2-5-2-8 0z" fill="#f0642a" /><path d="M20.500 11.500c3 1.500 5 1.500 8 0l-2 7c-3 1.500-5 1.500-8 0z" fill="#8cc63f" />
            <path d="M8.500 20c3-2 5-2 8 0l-2 7c-3-2-5-2-8 0z" fill="#2e9be6" /><path d="M18 20.500c3 1.500 5 1.500 8 0l-2 7c-3 1.500-5 1.500-8 0z" fill="#fdc822" />
          </Svg>
        </StartButton>
        {apps.map(a => <AppButton key={a.name} $open={a.open} $front={a.front} aria-label={a.name}>{a.art}</AppButton>)}
        <Tray>
          <TrayLang>EN</TrayLang>
          <Caret dir="up" color="#fff" />
          <Svg><path d="M2.500 1v14" stroke="#fff" strokeWidth="2" /><path d="M3 2h6v6H3zM9 4h6l-1.500 3 1.500 3H9z" fill="#fff" /></Svg>
          <Svg><path d="M4.500 4.500h11v7h-11zM8 14.500h5M10.500 12v2" stroke="#fff" strokeWidth="1.300" /><path d="M0 3h5M1.500 0v3M3.500 0v3M2.500 4v9h4" stroke="#fff" strokeWidth="1.300" /></Svg>
          <Svg><path d="M1 5h3l4-4v14l-4-4H1z" fill="#fff" /><path d="M10 5.500c1 1.500 1 3.500 0 5M12 3.500c2 3 2 6 0 9" stroke="#e6e0e6" /></Svg>
          <span>10:58 AM<br />10/16/2019</span>
          <ShowDesktop aria-label="Desktop" />
        </Tray>
      </TaskBar>
    </Shell>
  );
}
